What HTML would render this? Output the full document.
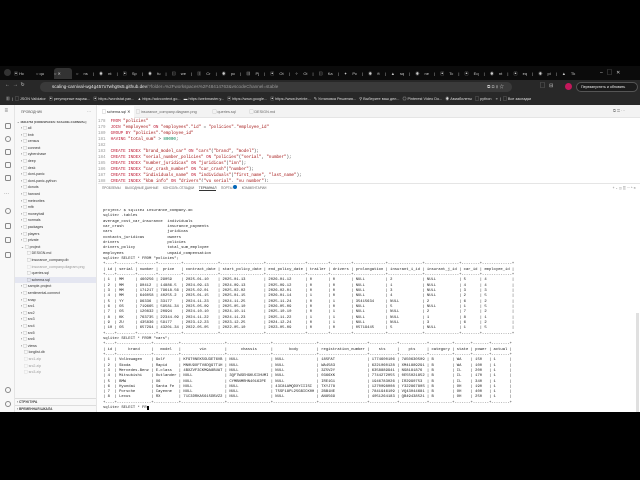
<!DOCTYPE html>
<html><head><meta charset="utf-8"><style>
*{margin:0;padding:0;box-sizing:border-box}
html{overflow:hidden}
body{width:640px;height:480px;background:#000;overflow:hidden;position:relative;font-family:"Liberation Sans","Noto Sans CJK SC",sans-serif}
.abs{position:absolute}
.tabstrip{left:0;top:66px;width:640px;height:14px;background:#0b0b0b;overflow:hidden}
.tab{position:absolute;top:2px;height:11px;font-size:4px;color:#ccc;line-height:11px;white-space:nowrap;overflow:hidden}
.addr{left:0;top:80px;width:640px;height:14px;background:#282828}
.bm{left:0;top:94px;width:640px;height:11px;background:#282828;font-size:3.8px;color:#ddd;line-height:11px;white-space:nowrap;overflow:hidden}
.vs{left:0;top:105px;width:640px;height:307px;background:#fff}
.act{left:0;top:105px;width:15px;height:307px;background:#f8f8f8;border-right:1px solid #e5e5e5}
.side{left:15px;top:105px;width:82px;height:307px;background:#f8f8f8;border-right:1px solid #e5e5e5;font-size:3.6px;color:#333;overflow:hidden}
.tree div{position:absolute;left:0;height:6.6px;line-height:6.6px;white-space:nowrap}
.ico{position:absolute;left:4.5px;width:6px;height:6px;border:0.7px solid #888;border-radius:1.5px}
.code{left:98px;top:119px;font-family:"Liberation Mono",monospace;font-size:4.2px;line-height:6px;color:#333;white-space:pre}
.k{color:#c0203a}.s{color:#a31515}.n{color:#999}
.term{left:103px;top:209px;width:530px;overflow:hidden;font-family:"Liberation Mono",monospace;font-size:3.83px;line-height:5.333px;color:#222;white-space:pre}
.ptabs{left:98px;top:183px;width:542px;height:9px;border-top:1px solid #e5e5e5;font-size:3.2px;color:#666;line-height:8px;white-space:nowrap}
</style></head><body>
<div class="abs tabstrip">
<div style="position:absolute;left:4px;top:3px;width:7px;height:7px;border-radius:50%;background:#333"></div>
<div class="tab" style="left:14px;width:22px">▣ Нс</div>
<div class="tab" style="left:36px;width:18px">○ qu</div>
<div class="tab" style="left:54px;width:18px;background:#333;border-radius:3px 3px 0 0">○ ✕</div>
<div class="tab" style="left:76px;width:500px;word-spacing:4px">○ ns | ◉ nt | ▣ Sp | ◉ fu | ▤ we | ▥ Cr | ◉ pc | ▦ Pj | ▣ Ot | ✧ Oi | ▤ Ka | ✦ Pc | ◉ ft | ▲ sq | ◉ ne | ▣ Tc | ▣ Eq | ◉ nt | ▣ eq | ◉ pi | ▲ Tk | ▲ sq | ◉ zh | ▲ sq | ○ m | +</div>
<div class="tab" style="left:600px;width:38px;font-size:5px">–&nbsp;&nbsp;&nbsp;▢&nbsp;&nbsp;&nbsp;✕</div>
</div>
<div class="abs addr"><div style="position:absolute;left:5px;top:2px;font-size:5px;color:#ccc">←&nbsp;&nbsp;→&nbsp;&nbsp;↻</div></div>
<div class="abs" style="left:40px;top:82px;width:472px;height:10px;background:#3a3a3a;border-radius:5px;font-size:4.6px;color:#e8e8e8;line-height:10px;padding-left:12px;white-space:nowrap;overflow:hidden">scaling-carnival-wg4g457x7whg9x5.github.dev<span style="color:#999">/?folder=%2Fworkspaces%2F48414763&amp;vscodeChannel=stable</span><span style="position:absolute;right:8px;color:#ccc">⧉ ⊡ ⚲ ☆</span></div>
<div class="abs" style="left:540px;top:82px;font-size:5px;color:#ccc">▢ &nbsp; ⊟</div>
<div class="abs" style="left:565px;top:83px;width:7px;height:7px;border-radius:50%;background:#c2185b"></div>
<div class="abs" style="left:576px;top:82px;width:62px;height:10px;border-radius:5px;background:#1b1b1b;border:1px solid #555;font-size:3.6px;color:#eee;line-height:8px;padding-left:4px;white-space:nowrap;overflow:hidden">Перезапустить и обновить</div>
<div class="abs bm"><span style="margin-left:6px">▦ &nbsp;|&nbsp; ▢ JSON Validator &nbsp; ▣ регулярные выраж... &nbsp; ▣ https://wordstat.yan... &nbsp; ▲ https://advcontext.go... &nbsp; ▬ https://webmaster.y... &nbsp; ▣ https://www.google... &nbsp; ▣ https://www.liveinte... &nbsp; ✎ Установка Решения... &nbsp; ⚲ Выберите ваш дел... &nbsp; ◎ Pinterest Video Do... &nbsp; ◉ Авиабилеты &nbsp; ▢ python &nbsp;&nbsp; » &nbsp;|&nbsp; ▢ Все закладки</span></div>
<div class="abs vs"></div>
<div class="abs act">
<div style="position:absolute;left:4.5px;top:3px;font-size:6px;color:#666">≡</div>
<div class="ico" style="top:18px"></div><div class="ico" style="top:31px;border-radius:50%"></div><div class="ico" style="top:44px"></div><div class="ico" style="top:57px"></div><div class="ico" style="top:70px"></div>
<div style="position:absolute;left:4px;top:86px;font-size:5px;color:#666">···</div>
<div class="ico" style="top:103px;border-radius:50%"></div><div class="ico" style="top:118px"></div><div class="ico" style="top:132px"></div><div class="ico" style="top:147px"></div>
<div class="ico" style="top:282px;border-radius:50%"></div><div class="ico" style="top:296px;border-radius:50%"></div>
</div>
<div class="abs side">
<div style="position:absolute;left:6px;top:5px;font-size:3.4px;color:#555">ПРОВОДНИК</div>
<div style="position:absolute;left:72px;top:4px;font-size:4px;color:#777">···</div>
<div style="position:absolute;left:2px;top:15px;font-size:2.9px;font-weight:bold;color:#444;white-space:nowrap">⌄ 48414763 [CODESPACES: SCALING-CARNIVAL]</div>
<div class="tree" style="position:absolute;left:0;top:20px;width:82px">
<div style="top:0;left:6px">› ▢ all</div><div style="top:6.6px;left:6px">› ▢ bnb</div><div style="top:13.2px;left:6px">› ▢ census</div><div style="top:19.8px;left:6px">› ▢ connect</div><div style="top:26.4px;left:6px">› ▢ cyberchase</div><div style="top:33px;left:6px">› ▢ deep</div><div style="top:39.6px;left:6px">› ▢ desk</div><div style="top:46.2px;left:6px">› ▢ dont-panic</div><div style="top:52.8px;left:6px">› ▢ dont-panic-python</div><div style="top:59.4px;left:6px">› ▢ donuts</div><div style="top:66px;left:6px">› ▢ harvard</div><div style="top:72.6px;left:6px">› ▢ meteorites</div><div style="top:79.2px;left:6px">› ▢ mfb</div><div style="top:85.8px;left:6px">› ▢ moneyball</div><div style="top:92.4px;left:6px">› ▢ normals</div><div style="top:99px;left:6px">› ▢ packages</div><div style="top:105.6px;left:6px">› ▢ players</div><div style="top:112.2px;left:6px">› ▢ private</div><div style="top:118.8px;left:6px">⌄ ▢ project</div>
<div style="top:125.4px;left:12px">▢ DESIGN.md</div><div style="top:132px;left:12px">▢ insurance_company.db</div><div style="top:138.6px;left:12px;color:#999">▢ insurance_company.diagram.png</div><div style="top:145.2px;left:12px">▢ queries.sql</div><div style="top:151.8px;left:0;width:82px;padding-left:12px;background:#e4e6f1">▢ schema.sql</div>
<div style="top:158.4px;left:6px">› ▢ sample-project</div><div style="top:165px;left:6px">› ▢ sentimental-connect</div><div style="top:171.6px;left:6px">› ▢ snap</div><div style="top:178.2px;left:6px">› ▢ src1</div><div style="top:184.8px;left:6px">› ▢ src2</div><div style="top:191.4px;left:6px">› ▢ src3</div><div style="top:198px;left:6px">› ▢ src4</div><div style="top:204.6px;left:6px">› ▢ src5</div><div style="top:211.2px;left:6px">› ▢ src6</div><div style="top:217.8px;left:6px">› ▢ views</div><div style="top:224.4px;left:9px">▢ longlist.db</div><div style="top:231px;left:9px;color:#999">▢ src1.zip</div><div style="top:237.6px;left:9px;color:#999">▢ src2.zip</div><div style="top:244.2px;left:9px;color:#999">▢ src3.zip</div>
</div>
<div style="position:absolute;left:0;top:293px;width:82px;border-top:1px solid #ddd;font-size:3.2px;padding:1px 2px;font-weight:bold;color:#444">› СТРУКТУРА</div>
<div style="position:absolute;left:0;top:300px;width:82px;border-top:1px solid #ddd;font-size:3.2px;padding:1px 2px;font-weight:bold;color:#444">› ВРЕМЕННАЯ ШКАЛА</div>
</div>
<div class="abs" style="left:98px;top:105px;width:542px;height:13px;background:#f3f3f3;border-bottom:1px solid #e5e5e5"></div>
<div class="abs" style="left:98px;top:106px;width:36px;height:12px;background:#fff;font-size:3.8px;line-height:12px;padding-left:4px;color:#333;white-space:nowrap">▢ schema.sql ✕</div>
<div class="abs" style="left:136px;top:106px;font-size:3.8px;line-height:12px;color:#666;white-space:nowrap">▢ insurance_company.diagram.png &nbsp;&nbsp;&nbsp;&nbsp;&nbsp;&nbsp;&nbsp;&nbsp;&nbsp;&nbsp;&nbsp;&nbsp;&nbsp; ▢ queries.sql &nbsp;&nbsp;&nbsp;&nbsp;&nbsp;&nbsp;&nbsp;&nbsp;&nbsp;&nbsp;&nbsp; ▢ DESIGN.md</div>
<div class="abs" style="left:613px;top:108px;font-size:4px;color:#888">⧉ ◫ ···</div>
<div class="abs code"><span class="n">178</span>  <span class="k">FROM</span> <span class="s">"policies"</span>
<span class="n">179</span>  <span class="k">JOIN</span> <span class="s">"employees"</span> <span class="k">ON</span> <span class="s">"employees"</span>.<span class="s">"id"</span> = <span class="s">"policies"</span>.<span class="s">"employee_id"</span>
<span class="n">180</span>  <span class="k">GROUP BY</span> <span class="s">"policies"</span>.<span class="s">"employee_id"</span>
<span class="n">181</span>  <span class="k">HAVING</span> <span class="s">"total_sum"</span> &gt; <span style="color:#098658">80000</span>;
<span class="n">182</span>
<span class="n">183</span>  <span class="k">CREATE INDEX</span> <span class="s">"brand_model_car"</span> <span class="k">ON</span> <span class="s">"cars"</span>(<span class="s">"brand"</span>, <span class="s">"model"</span>);
<span class="n">184</span>  <span class="k">CREATE INDEX</span> <span class="s">"serial_number_policies"</span> <span class="k">ON</span> <span class="s">"policies"</span>(<span class="s">"serial"</span>, <span class="s">"number"</span>);
<span class="n">185</span>  <span class="k">CREATE INDEX</span> <span class="s">"number_juridicas"</span> <span class="k">ON</span> <span class="s">"juridicas"</span>(<span class="s">"inn"</span>);
<span class="n">186</span>  <span class="k">CREATE INDEX</span> <span class="s">"car_crash_number"</span> <span class="k">ON</span> <span class="s">"car_crash"</span>(<span class="s">"number"</span>);
<span class="n">187</span>  <span class="k">CREATE INDEX</span> <span class="s">"individuals_name"</span> <span class="k">ON</span> <span class="s">"individuals"</span>(<span class="s">"first_name"</span>, <span class="s">"last_name"</span>);
<span class="n">188</span>  <span class="k">CREATE INDEX</span> <span class="s">"kbm_info"</span> <span class="k">ON</span> <span class="s">"drivers"</span>(<span class="s">"vu_serial"</span>, <span class="s">"vu_number"</span>);</div>
<div class="abs" style="left:98px;top:182px;width:542px;height:230px;background:#fff"></div>
<div class="abs ptabs"><span style="margin-left:4px">ПРОБЛЕМЫ &nbsp;&nbsp;&nbsp; ВЫХОДНЫЕ ДАННЫЕ &nbsp;&nbsp;&nbsp; КОНСОЛЬ ОТЛАДКИ &nbsp;&nbsp;&nbsp; <span style="color:#333;border-bottom:1px solid #333">ТЕРМИНАЛ</span> &nbsp;&nbsp;&nbsp; ПОРТЫ <span style="display:inline-block;width:4px;height:4px;border-radius:50%;background:#0066b8"></span> &nbsp;&nbsp;&nbsp; КОММЕНТАРИИ</span><span style="position:absolute;right:4px;top:0">+ ⌄ ◫ ▥ ··· ^ ✕</span></div>
<div class="abs term">project/ $ sqlite3 insurance_company.db
sqlite> .tables
average_cost_car_insurance  individuals
car_crash                   insurance_payments
cars                        juridicas
contacts_juridicas          owners
drivers                     policies
drivers_policy              total_sum_employee
employees                   unpaid_compensation
sqlite> SELECT * FROM "policies";
+----+--------+--------+----------+---------------+-------------------+-----------------+---------+---------+--------------+---------------+---------------+--------+-------------+
| id | serial | number |  price   | contract_date | start_policy_date | end_policy_date | trailer | drivers | prolongation | insurant_i_id | insurant_j_id | car_id | employee_id |
+----+--------+--------+----------+---------------+-------------------+-----------------+---------+---------+--------------+---------------+---------------+--------+-------------+
| 1  | MM     | 460256 | 29059    | 2025-01-10    | 2025-01-13        | 2026-01-12      | 0       | 0       | NULL         | 2             | NULL          | 5      | 4           |
| 2  | MM     | 90412  | 14886.5  | 2024-09-13    | 2024-09-13        | 2025-09-12      | 0       | 0       | NULL         | 1             | NULL          | 4      | 4           |
| 3  | MM     | 171217 | 79618.56 | 2025-02-01    | 2025-02-02        | 2026-02-01      | 0       | 0       | NULL         | 3             | NULL          | 3      | 3           |
| 4  | MM     | 646058 | 40255.2  | 2025-01-15    | 2025-01-15        | 2026-01-14      | 1       | 0       | NULL         | 4             | NULL          | 2      | 5           |
| 5  | YY     | 96336  | 33177    | 2024-11-23    | 2024-11-25        | 2025-11-24      | 0       | 1       | 35415634     | NULL          | 2             | 6      | 2           |
| 6  | OS     | 719665 | 59581.34 | 2025-05-09    | 2025-05-10        | 2026-05-09      | 0       | 0       | NULL         | 5             | NULL          | 1      | 5           |
| 7  | OS     | 120832 | 20994    | 2024-10-10    | 2024-10-11        | 2025-10-10      | 0       | 1       | NULL         | NULL          | 2             | 7      | 2           |
| 8  | KK     | 763735 | 22344.09 | 2024-11-22    | 2024-11-23        | 2025-11-22      | 1       | 1       | NULL         | NULL          | 1             | 8      | 1           |
| 9  | ZU     | 435836 | 59177    | 2023-12-23    | 2023-12-25        | 2024-12-24      | 0       | 1       | NULL         | NULL          | 3             | 6      | 2           |
| 10 | OS     | 657294 | 43201.34 | 2022-05-05    | 2022-05-10        | 2023-05-09      | 0       | 0       | 05719445     | 5             | NULL          | 1      | 5           |
+----+--------+--------+----------+---------------+-------------------+-----------------+---------+---------+--------------+---------------+---------------+--------+-------------+
sqlite> SELECT * FROM "cars";
+----+---------------+-----------+-------------------+-------------------+-------------------+---------------------+------------+------------+----------+-------+-------+--------+
| id |     brand     |   model   |        vin        |      chassis      |       body        | registration_number |    sts     |    pts     | category | state | power | actual |
+----+---------------+-----------+-------------------+-------------------+-------------------+---------------------+------------+------------+----------+-------+-------+--------+
| 1  | Volkswagen    | Golf      | KF9T0NEK5GU3ET6VB | NULL              | NULL              | 185FAT              | 1774600106 | 7A50630509 | B        | WA    | 150   | 1      |
| 2  | Skoda         | Rapid     | MN0U9XFTV8DQ97T1H | NULL              | NULL              | WA4583              | 6221060128 | XM41889291 | B        | WA    | 100   | 1      |
| 3  | Mercedes-Benz | E-class   | 4BXZVF3CKM9A8BUAT | NULL              | NULL              | 3Z5V2Y              | 6358889941 | NG8181876  | B        | IL    | 200   | 1      |
| 4  | Mitsubishi    | Outlander | NULL              | 3QF7WSEHGKUCIHUMI | NULL              | 0366XK              | 7744272055 | 0E55021852 | B        | IL    | 170   | 1      |
| 5  | BMW           | X6        | NULL              | CYMBNMRHN40162PE  | NULL              | IRE1G1              | 1946783026 | IR2990753  | B        | IL    | 340   | 1      |
| 6  | Hyundai       | Santa Fe  | NULL              | NULL              | 43C81AMQDXYCIISI  | TXYJ78              | 1270098008 | Y32286780S | B        | OH    | 190   | 1      |
| 7  | Porsche       | Cayenne   | NULL              | NULL              | T5SF18PL25GBICK0H | 2BB1NE              | 7841946109 | VQ43044681 | B        | OH    | 400   | 1      |
| 8  | Lexus         | RX        | 71C3DRKA5615DBVZ2 | NULL              | NULL              | AN8569              | 4051264183 | QB49438521 | B        | OH    | 250   | 1      |
+----+---------------+-----------+-------------------+-------------------+-------------------+---------------------+------------+------------+----------+-------+-------+--------+
sqlite> SELECT * FR<span style="background:#000;color:#fff"> </span></div>
<div class="abs" style="left:636px;top:313px;width:3px;height:99px;background:#e0e0e0"></div>
<div class="abs" style="left:0;top:412px;width:640px;height:68px;background:#000"></div>
</body></html>
